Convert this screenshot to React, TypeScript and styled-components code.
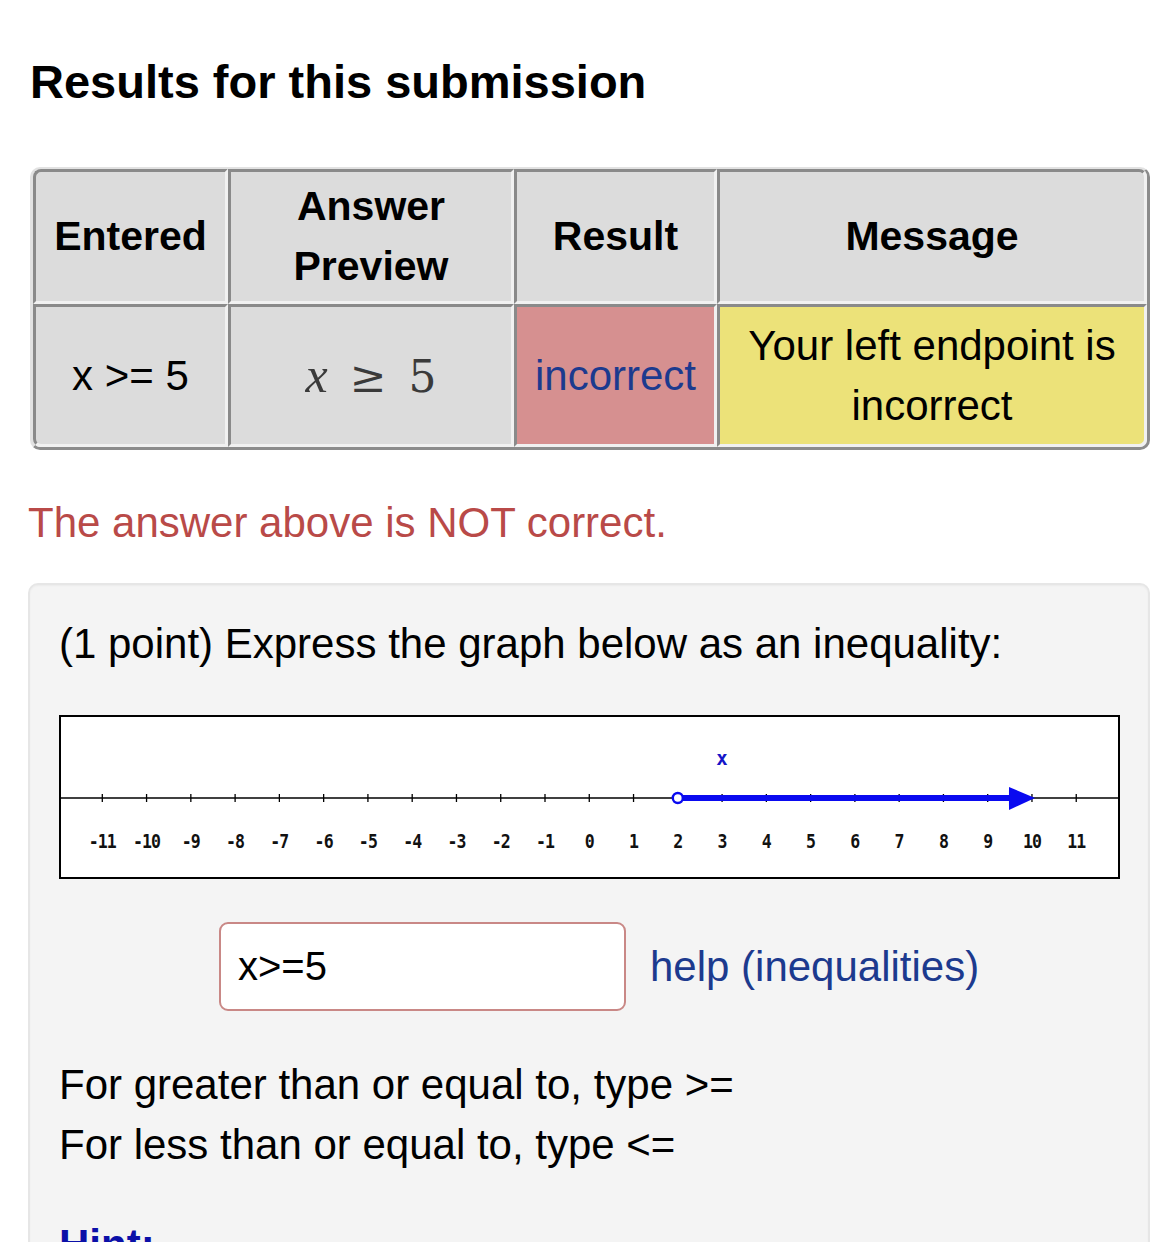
import React from 'react'
import styled, { createGlobalStyle } from 'styled-components'

const Global = createGlobalStyle`
  html, body {
    margin: 0;
    padding: 0;
    background: #fff;
  }
  body {
    font-family: "Liberation Sans", Arial, sans-serif;
    font-size: 42px;
    line-height: 60px;
    color: #000;
  }
`

const TICK0 = 41.3
const STEP = 44.27
const AXIS_Y = 81

const tx = (n: number) => TICK0 + (n + 11) * STEP

function NumberLine() {
  const nums: number[] = []
  for (let n = -11; n <= 11; n++) nums.push(n)
  const arrowTip = tx(10) + 3
  return (
    <svg width="1057" height="160" viewBox="0 0 1057 160">
      <line x1="0" y1={AXIS_Y} x2="1057" y2={AXIS_Y} stroke="#000" strokeWidth="1.6" />
      {nums.map(n => (
        <g key={n}>
          <line x1={tx(n)} y1={AXIS_Y - 4} x2={tx(n)} y2={AXIS_Y + 4} stroke="#000" strokeWidth="1.3" />
          <text
            x={tx(n)}
            y={131}
            textAnchor="middle"
            fontFamily='"DejaVu Sans Mono", "Liberation Mono", monospace'
            fontWeight="bold"
            fontSize="18"
            letterSpacing="-1"
            fill="#111"
            transform={`translate(${tx(n)} 131) scale(0.92 1.12) translate(${-tx(n)} -131)`}
          >
            {n}
          </text>
        </g>
      ))}
      <line x1={tx(2)} y1={AXIS_Y} x2={arrowTip - 22} y2={AXIS_Y} stroke="#0a0af0" strokeWidth="6" />
      <polygon
        points={`${arrowTip - 26},${AXIS_Y - 11} ${arrowTip},${AXIS_Y} ${arrowTip - 26},${AXIS_Y + 12}`}
        fill="#0a0af0"
      />
      <circle cx={tx(2)} cy={AXIS_Y} r="5" fill="#fff" stroke="#0a0af0" strokeWidth="2.4" />
      <text
        x={tx(3)}
        y={AXIS_Y - 33}
        textAnchor="middle"
        fontFamily='"DejaVu Sans Mono", monospace'
        fontWeight="bold"
        fontSize="19"
        fill="#1515c8"
      >
        x
      </text>
    </svg>
  )
}

export default function App() {
  return (
    <S.Page>
      <Global />
      <S.Title>Results for this submission</S.Title>

      <S.Table>
        <colgroup>
          <col style={{ width: 195 }} />
          <col style={{ width: 286 }} />
          <col style={{ width: 203 }} />
          <col />
        </colgroup>
        <thead>
          <tr>
            <S.Head>Entered</S.Head>
            <S.Head>
              Answer
              <br />
              Preview
            </S.Head>
            <S.Head>Result</S.Head>
            <S.Head>Message</S.Head>
          </tr>
        </thead>
        <tbody>
          <tr>
            <S.Cell>x &gt;= 5</S.Cell>
            <S.Cell>
              <S.Math>
                <i>x</i> <S.Rel>≥</S.Rel> 5
              </S.Math>
            </S.Cell>
            <S.Cell tone="bad">
              <S.Verdict>incorrect</S.Verdict>
            </S.Cell>
            <S.Cell tone="warn">
              Your left endpoint is
              <br />
              incorrect
            </S.Cell>
          </tr>
        </tbody>
      </S.Table>

      <S.Error>The answer above is NOT correct.</S.Error>

      <S.Well>
        <S.Para>(1 point) Express the graph below as an inequality:</S.Para>
        <S.Graph>
          <NumberLine />
        </S.Graph>

        <S.AnswerRow>
          <S.Answer defaultValue="x>=5" />
          <S.Help href="#">help (inequalities)</S.Help>
        </S.AnswerRow>

        <S.Para>
          For greater than or equal to, type &gt;=
          <br />
          For less than or equal to, type &lt;=
        </S.Para>

        <S.Hint href="#">Hint:</S.Hint>
      </S.Well>
    </S.Page>
  )
}

const S = {
  Page: styled.div`
    padding: 54px 15px 0 28px;
  `,

  Title: styled.h1`
    margin: 0 0 57px 2px;
    font-size: 47px;
    line-height: 56px;
    font-weight: bold;
  `,

  Table: styled.table`
    width: 1120px;
    margin-left: 2px;
    border-collapse: separate;
    border-spacing: 0;
    table-layout: fixed;
    border-top: 2px solid #e2e2e2;
    border-left: 3px solid #e2e2e2;
    border-right: 3px solid #8c8c8c;
    border-bottom: 3px solid #8c8c8c;
    border-radius: 10px;
    background: #f0f0f0;
  `,

  Head: styled.th`
    background: #dcdcdc;
    border-top: 3px solid #8a8a8a;
    border-left: 3px solid #8a8a8a;
    border-right: 3px solid #f1f1f1;
    border-bottom: 3px solid #f1f1f1;
    padding: 4px 4px 5px;
    text-align: center;
    vertical-align: middle;
    font-size: 41px;
    line-height: 60px;
    font-weight: bold;

    &:first-child {
      border-top-left-radius: 8px;
    }
    &:last-child {
      border-top-right-radius: 8px;
    }
  `,

  Cell: styled.td<{ tone?: 'bad' | 'warn' }>`
    background: ${p =>
      p.tone === 'bad' ? '#d69090' : p.tone === 'warn' ? '#ece279' : '#dcdcdc'};
    border-top: 3px solid #8a8a8a;
    border-left: 3px solid #8a8a8a;
    border-right: 3px solid #f1f1f1;
    border-bottom: 3px solid #f1f1f1;
    padding: 9px 4px 8px;
    text-align: center;
    vertical-align: middle;
    font-size: 42px;
    line-height: 60px;

    &:first-child {
      border-bottom-left-radius: 8px;
    }
    &:last-child {
      border-bottom-right-radius: 8px;
    }
  `,

  Math: styled.span`
    font-family: "DejaVu Serif", "Liberation Serif", serif;
    font-size: 44px;
    color: #3a3a3a;

    i {
      font-family: "Liberation Serif", serif;
      font-size: 50px;
    }
  `,

  Rel: styled.span`
    margin: 0 8px;
  `,

  Verdict: styled.span`
    color: #1c3a8e;
  `,

  Error: styled.div`
    margin: 43px 0 30px 0;
    color: #b94a48;
  `,

  Well: styled.div`
    background: #f4f4f4;
    border: 2px solid #e6e6e6;
    border-radius: 10px;
    box-shadow: inset 0 1px 2px rgba(0, 0, 0, 0.04);
    padding: 29px 29px 200px 29px;
  `,

  Para: styled.p`
    margin: 0;
  `,

  Graph: styled.div`
    margin-top: 41px;
    width: 1057px;
    height: 160px;
    border: 2px solid #000;
    background: #fff;
    line-height: 0;
  `,

  AnswerRow: styled.div`
    display: flex;
    align-items: center;
    gap: 24px;
    margin: 43px 0 44px 160px;
  `,

  Answer: styled.input`
    box-sizing: border-box;
    width: 407px;
    height: 89px;
    padding: 0 17px;
    border: 2px solid #c98886;
    border-radius: 9px;
    background: #fff;
    font-family: "Liberation Sans", Arial, sans-serif;
    font-size: 40px;
    color: #000;

    &:focus {
      outline: none;
    }
  `,

  Help: styled.a`
    color: #1c3a8e;
    text-decoration: none;
  `,

  Hint: styled.a`
    display: inline-block;
    margin-top: 40px;
    color: #0b10a8;
    font-weight: bold;
    text-decoration: none;
  `,
}
